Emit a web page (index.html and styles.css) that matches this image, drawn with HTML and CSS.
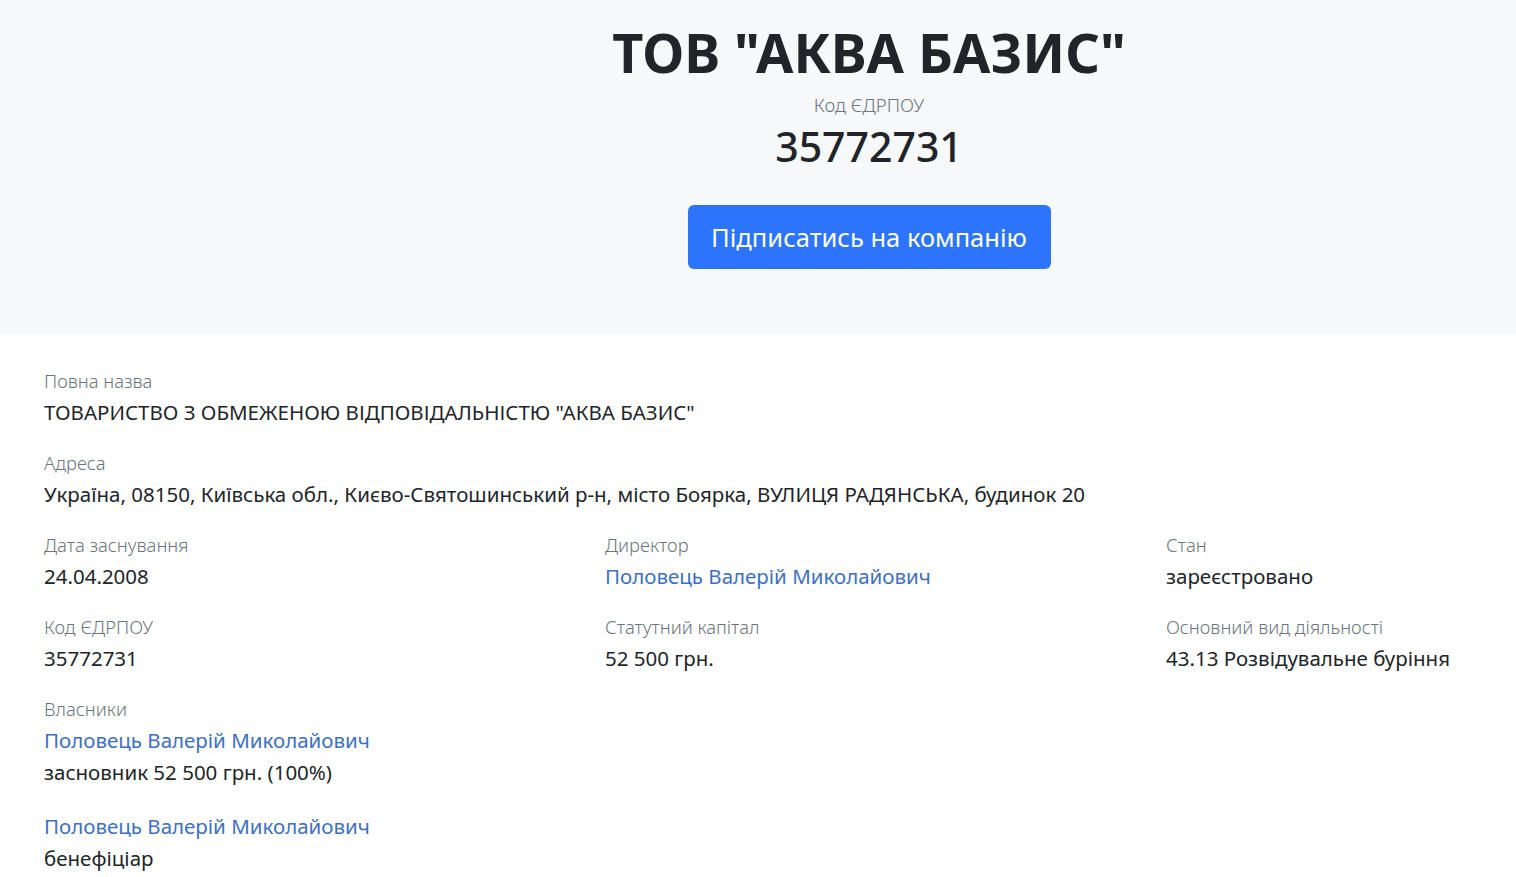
FILE: index.html
```html
<!DOCTYPE html>
<html lang="uk">
<head>
    <meta charset="UTF-8">
    <meta name="viewport" content="width=device-width, initial-scale=1.0">
    <title>ТОВ "АКВА БАЗИС"</title>
    <link rel="stylesheet" href="styles.css">
</head>
<body>
    <header class="hero">
        <div class="hero-inner">
            <h1 class="company-title">ТОВ "АКВА БАЗИС"</h1>
            <div class="hero-label">Код ЄДРПОУ</div>
            <div class="hero-code">35772731</div>
            <button class="subscribe-btn" type="button">Підписатись на компанію</button>
        </div>
    </header>

    <main class="details">
        <div class="field">
            <div class="field-label">Повна назва</div>
            <div class="field-value">ТОВАРИСТВО З ОБМЕЖЕНОЮ ВІДПОВІДАЛЬНІСТЮ "АКВА БАЗИС"</div>
        </div>
        <div class="field">
            <div class="field-label">Адреса</div>
            <div class="field-value">Україна, 08150, Київська обл., Києво-Святошинський р-н, місто Боярка, ВУЛИЦЯ РАДЯНСЬКА, будинок 20</div>
        </div>

        <div class="field-grid">
            <div class="field">
                <div class="field-label">Дата заснування</div>
                <div class="field-value">24.04.2008</div>
            </div>
            <div class="field">
                <div class="field-label">Директор</div>
                <div class="field-value"><a href="#" class="person-link">Половець Валерій Миколайович</a></div>
            </div>
            <div class="field">
                <div class="field-label">Стан</div>
                <div class="field-value">зареєстровано</div>
            </div>

            <div class="field">
                <div class="field-label">Код ЄДРПОУ</div>
                <div class="field-value">35772731</div>
            </div>
            <div class="field">
                <div class="field-label">Статутний капітал</div>
                <div class="field-value">52 500 грн.</div>
            </div>
            <div class="field">
                <div class="field-label">Основний вид діяльності</div>
                <div class="field-value">43.13 Розвідувальне буріння</div>
            </div>
        </div>

        <div class="field">
            <div class="field-label">Власники</div>
            <div class="owner">
                <div class="field-value"><a href="#" class="person-link">Половець Валерій Миколайович</a></div>
                <div class="field-value">засновник 52 500 грн. (100%)</div>
            </div>
            <div class="owner">
                <div class="field-value"><a href="#" class="person-link">Половець Валерій Миколайович</a></div>
                <div class="field-value">бенефіціар</div>
            </div>
        </div>
    </main>
</body>
</html>
```

FILE: styles.css
```css
:root {
    --hero-bg: #f6f8f9;
    --text-color: #212529;
    --muted-color: #6c757d;
    --link-color: #3d6fc6;
    --btn-bg: #2b74fb;
}

html, body {
    overflow-x: hidden;
}

body {
    margin: 0;
    font-family: "Noto Sans", "Open Sans", sans-serif;
    color: var(--text-color);
    background: #fff;
}

.hero {
    background-color: var(--hero-bg);
    height: 334px;
    box-sizing: border-box;
    padding: 18px 0 0 222px;
}

.hero-inner {
    display: flex;
    flex-direction: column;
    align-items: center;
}

.company-title {
    margin: 0;
    font-size: 54px;
    font-weight: 700;
    line-height: 68px;
}

.hero-label {
    margin-top: 6px;
    font-size: 18.6px;
    font-weight: 300;
    line-height: 26px;
    color: var(--muted-color);
}

.hero-code {
    font-size: 41px;
    line-height: 56px;
    font-weight: 500;
}

.subscribe-btn {
    margin-top: 31px;
    width: 363px;
    height: 64px;
    border: none;
    border-radius: 6px;
    background-color: var(--btn-bg);
    color: #fff;
    font-family: inherit;
    font-size: 25.5px;
    cursor: pointer;
}

.details {
    padding: 34px 0 0 44px;
}

.field {
    margin-bottom: 22px;
}

.field-label {
    font-size: 18.4px;
    font-weight: 300;
    line-height: 25px;
    margin-bottom: 3px;
    color: var(--muted-color);
}

.field-value {
    font-size: 20.5px;
    line-height: 32px;
}

.field-grid {
    display: grid;
    grid-template-columns: 561px 561px 1fr;
}

.owner + .owner {
    margin-top: 22px;
}

.person-link {
    color: var(--link-color);
    text-decoration: none;
}
```
